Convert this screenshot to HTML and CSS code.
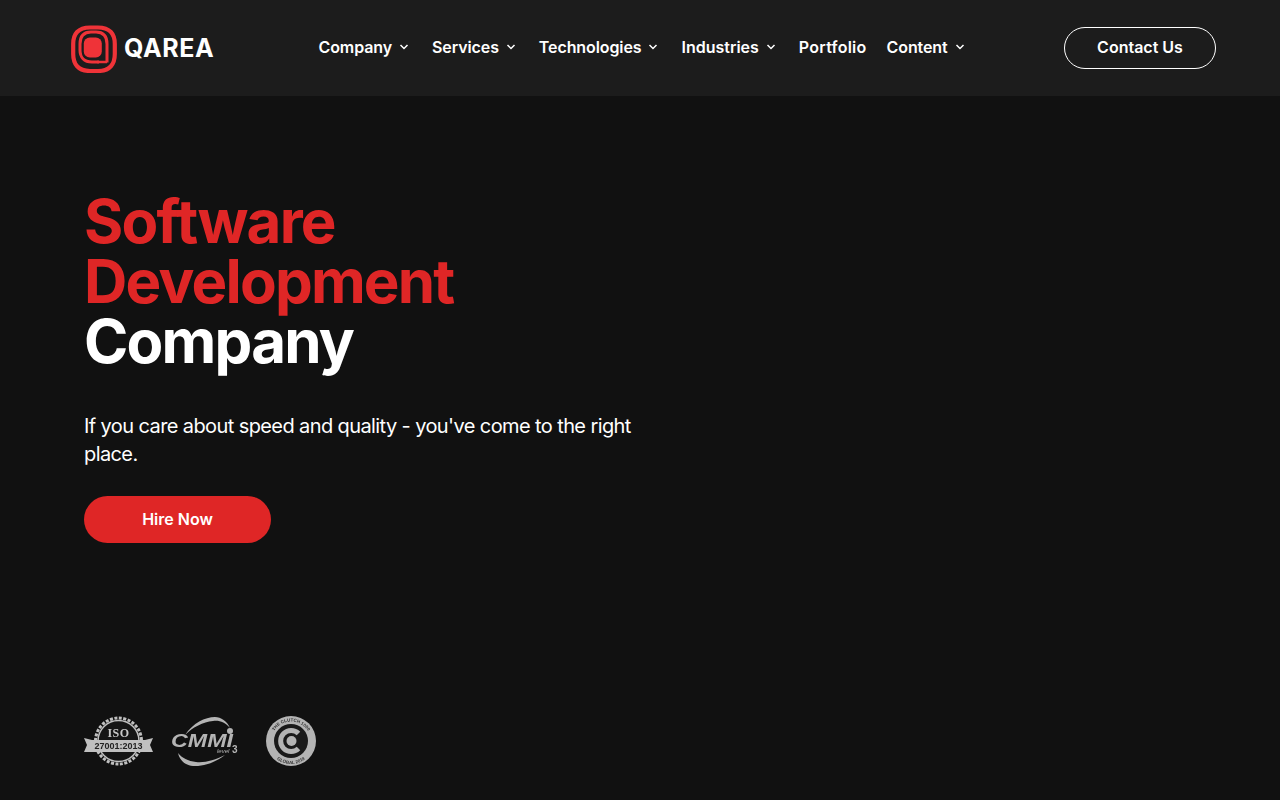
FILE: index.html
```html
<!DOCTYPE html>
<html lang="en">
<head>
    <meta charset="UTF-8">
    <meta name="viewport" content="width=device-width, initial-scale=1.0">
    <title>QArea</title>
    <link rel="stylesheet" href="styles.css">
</head>
<body>
    <header class="header">
        <a class="logo" href="#">
            <svg class="logo-mark" width="46" height="50" viewBox="0 0 46 50" fill="none">
                <path d="M27 48H19C7 48 2.200 41 2.200 31V21C2.200 11 7 4.500 19 4.500H27C39 4.500 43.800 11 43.800 21V31C43.800 41 39 48 27 48Z" stroke="#ef3338" stroke-width="4.200"/>
                <path d="M28 39H21C13 39 9 34 9 27V21C9 13 13 9 20 9H25C32 9 36 13 36 21V31C36 35 36 38 36 39.500" stroke="#ef3338" stroke-width="3"/>
                <path d="M26 39H36" stroke="#ef3338" stroke-width="2.500"/>
                <rect x="12.800" y="14.500" width="18" height="20" rx="6" fill="#ef3338"/>
            </svg>
            <span class="logo-text">QAREA</span>
        </a>
        <nav class="nav">
            <a class="nav-item" href="#">Company <svg class="chev" width="10" height="6" viewBox="0 0 10 6"><path d="M1.500 1L5 4.500L8.500 1" fill="none" stroke="#fff" stroke-width="1.500"/></svg></a>
            <a class="nav-item" href="#">Services <svg class="chev" width="10" height="6" viewBox="0 0 10 6"><path d="M1.500 1L5 4.500L8.500 1" fill="none" stroke="#fff" stroke-width="1.500"/></svg></a>
            <a class="nav-item" href="#">Technologies <svg class="chev" width="10" height="6" viewBox="0 0 10 6"><path d="M1.500 1L5 4.500L8.500 1" fill="none" stroke="#fff" stroke-width="1.500"/></svg></a>
            <a class="nav-item nav-wide" href="#">Industries <svg class="chev" width="10" height="6" viewBox="0 0 10 6"><path d="M1.500 1L5 4.500L8.500 1" fill="none" stroke="#fff" stroke-width="1.500"/></svg></a>
            <a class="nav-item nav-plain" href="#">Portfolio</a>
            <a class="nav-item" href="#">Content <svg class="chev" width="10" height="6" viewBox="0 0 10 6"><path d="M1.500 1L5 4.500L8.500 1" fill="none" stroke="#fff" stroke-width="1.500"/></svg></a>
        </nav>
        <a class="contact" href="#">Contact Us</a>
    </header>

    <main class="hero">
        <h1 class="title"><span class="red">Software<br>Development</span><br>Company</h1>
        <p class="lead">If you care about speed and quality - you've come to the right place.</p>
        <a class="hire" href="#">Hire Now</a>

        <div class="badges">
            <!-- ISO -->
            <svg class="badge" width="70" height="52" viewBox="0 0 70 52">
                <circle cx="34.500" cy="26" r="23" fill="none" stroke="#c0c0c0" stroke-width="3" stroke-dasharray="3 1.500"/>
                <circle cx="34.500" cy="26" r="20.500" fill="#151515" stroke="#c0c0c0" stroke-width="1.500"/>
                <text x="34.500" y="22" class="iso">ISO</text>
                <path d="M0 23L8 25H61L69 23L66 30L69 37H0L3 30Z" fill="#c0c0c0"/>
                <text x="34.500" y="34" class="iso-num">27001:2013</text>
            </svg>
            <!-- CMMI -->
            <svg class="badge" width="70" height="52" viewBox="0 0 70 52">
                <path d="M14 20C22 8 34 2 44 2C50 2 56 6 59 13C54 7 48 5 42 6C32 7 22 12 14 20Z" fill="#b4b4b4"/>
                <path d="M7 38C9 47 16 51 24 51C36 51 46 46 54 40C44 45 34 48 25 47C17 46 11 43 7 38Z" fill="#b4b4b4"/>
                <text x="0" y="32" class="cmmi" textLength="62" lengthAdjust="spacingAndGlyphs">CMMI</text>
                <circle cx="59" cy="16" r="3" fill="#b4b4b4"/>
                <text x="46" y="38" class="cmmi-level">level</text>
                <text x="61" y="38" class="cmmi-three">3</text>
            </svg>
            <!-- Clutch -->
            <svg class="badge" width="52" height="52" viewBox="0 0 52 52">
                <defs>
                    <path id="clutchTop" d="M6.500 26A19.500 19.500 0 0 1 45.500 26"/>
                    <path id="clutchBottom" d="M3 26A23 23 0 0 0 49 26"/>
                </defs>
                <circle cx="26" cy="26" r="25" fill="#b4b4b4"/>
                <text class="clutch-text"><textPath href="#clutchTop" startOffset="50%">THE CLUTCH 1000</textPath></text>
                <text class="clutch-text"><textPath href="#clutchBottom" startOffset="50%">GLOBAL 2019</textPath></text>
                <circle cx="26" cy="26" r="17" fill="#1a1a1a"/>
                <path d="M33.500 18.500A10.500 10.500 0 1 0 33.500 33.500" fill="none" stroke="#b4b4b4" stroke-width="5"/>
                <circle cx="26.500" cy="26" r="5" fill="#b4b4b4"/>
            </svg>
        </div>
    </main>
</body>
</html>
```

FILE: styles.css
```css
* {
    box-sizing: border-box;
}
body {
    font-family: Inter, "Liberation Sans", sans-serif;
    background-color: #111111;
    color: #ffffff;
    margin: 0;
    height: 800px;
    overflow: hidden;
}
a {
    color: inherit;
    text-decoration: none;
}
.header {
    height: 96px;
    background-color: #1c1c1c;
    display: flex;
    align-items: center;
    padding: 0 64px 0 71px;
}
.logo {
    display: flex;
    align-items: center;
    gap: 7px;
    width: 247.500px;
}
.logo-mark {
    display: block;
}
.logo-text {
    font-size: 25px;
    font-weight: 700;
    letter-spacing: 0.6px;
}
.nav {
    display: flex;
    align-items: center;
    gap: 23px;
    padding-bottom: 2px;
    font-size: 16px;
    font-weight: 600;
    letter-spacing: -0.1px;
}
.nav-item {
    display: flex;
    align-items: center;
    gap: 7px;
}
.nav-wide {
    letter-spacing: 0;
}
.nav-plain {
    margin: 0 -3px 0 0;
    letter-spacing: 0.25px;
}
.contact {
    margin-left: auto;
    width: 152px;
    height: 42px;
    padding-bottom: 2px;
    border: 1px solid #ffffff;
    border-radius: 21px;
    display: flex;
    align-items: center;
    justify-content: center;
    font-size: 16px;
    font-weight: 600;
}
.hero {
    padding: 95px 0 0 84px;
}
.title {
    margin: 0;
    font-size: 60px;
    line-height: 60px;
    font-weight: 700;
    letter-spacing: -1.8px;
}
.red {
    color: #df2626;
}
.lead {
    margin: 41px 0 0;
    width: 580px;
    font-size: 20px;
    line-height: 28px;
    letter-spacing: -0.6px;
}
.hire {
    margin-top: 28px;
    width: 187px;
    height: 47px;
    padding-bottom: 1px;
    border-radius: 24px;
    background-color: #df2626;
    display: flex;
    align-items: center;
    justify-content: center;
    font-size: 16px;
    font-weight: 600;
}
.badges {
    margin-top: 172px;
    display: flex;
    align-items: center;
    gap: 17px;
}
.badge {
    filter: blur(0.4px);
}
.badge + .badge + .badge {
    margin-left: 7px;
}
.iso {
    font-family: "Liberation Serif", serif;
    font-size: 12px;
    font-weight: 700;
    letter-spacing: 0.5px;
    fill: #c8c8c8;
    text-anchor: middle;
}
.iso-num {
    font-family: "Liberation Sans", sans-serif;
    font-size: 9px;
    font-weight: 700;
    fill: #222222;
    text-anchor: middle;
}
.cmmi {
    font-family: "Liberation Sans", sans-serif;
    font-size: 19px;
    font-weight: 700;
    font-style: italic;
    fill: #b4b4b4;
}
.cmmi-level {
    font-family: "Liberation Sans", sans-serif;
    font-size: 6px;
    font-style: italic;
    fill: #b4b4b4;
}
.cmmi-three {
    font-family: "Liberation Sans", sans-serif;
    font-size: 10px;
    font-weight: 700;
    fill: #b4b4b4;
}
.clutch-text {
    font-family: "Liberation Sans", sans-serif;
    font-size: 4.500px;
    font-weight: 700;
    fill: #333333;
    text-anchor: middle;
}
```
